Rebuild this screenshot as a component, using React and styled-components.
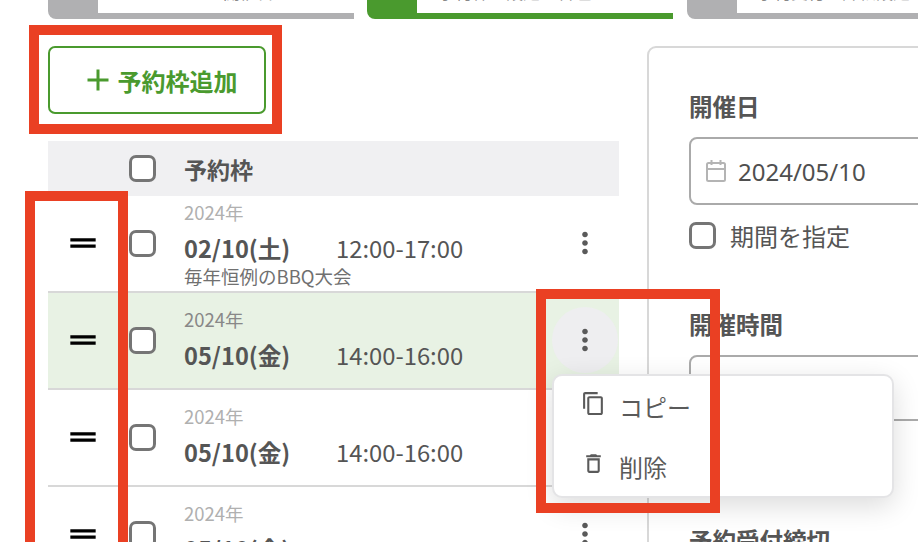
import React from "react";
import styled, { createGlobalStyle } from "styled-components";
import { MdDragHandle, MdMoreVert, MdOutlineContentCopy, MdOutlineDelete, MdAdd } from "react-icons/md";

const GlobalStyle = createGlobalStyle`
    html, body {
        margin: 0;
        width: 918px;
        height: 542px;
        overflow: hidden;
        background: #fff;
    }
    * {
        box-sizing: border-box;
    }
    body {
        font-family: "Noto Sans CJK JP", "Noto Sans", sans-serif;
        color: #555;
    }
`;

const Page = styled.div`
    position: relative;
    width: 918px;
    height: 542px;
    overflow: hidden;
    padding-left: 48px;
`;

const Tabs = styled.div`
    display: flex;
    gap: 13px;
    height: 19px;
    align-items: flex-end;
`;

const Tab = styled.div`
    flex: 0 0 306px;
    height: 60px;
    display: flex;
    border-radius: 0 0 0 8px;
    background: ${(p) => (p.$active ? "#4a9a2e" : "#b0b0b2")};
    padding: 0 0 6px 50px;

    &:last-child {
        margin-left: 1px;
    }
`;

const TabBody = styled.div`
    flex: 1;
    background: #fff;
    display: flex;
    align-items: flex-end;
    padding: 0 0 9px ${(p) => p.$indent}px;
    font-size: 17px;
    line-height: 24px;
    white-space: nowrap;
    color: #888;
`;

const Main = styled.div`
    display: flex;
    gap: 28px;
    margin-top: 27px;
`;

const LeftColumn = styled.div`
    flex: 0 0 571px;
`;

const AddButton = styled.button`
    width: 218px;
    height: 68px;
    display: flex;
    align-items: center;
    justify-content: center;
    gap: 2px;
    background: #fff;
    border: 2px solid #4a9a2e;
    border-radius: 7px;
    color: #4a9a2e;
    font-family: inherit;
    font-size: 24px;
    font-weight: 700;
    padding: 0 0 0 3px;
`;

const Table = styled.div`
    margin-top: 27px;
`;

const HeaderRow = styled.div`
    display: flex;
    align-items: center;
    height: 55px;
    background: #f0f0f2;
    padding-left: 81px;
    font-size: 23px;
    font-weight: 700;
`;

const Check = styled.span`
    flex: 0 0 27px;
    width: 27px;
    height: 27px;
    border: 3px solid #757575;
    border-radius: 7px;
    background: #fff;
`;

const HeaderLabel = styled.span`
    margin-left: 28px;
`;

const Row = styled.div`
    position: relative;
    display: flex;
    align-items: center;
    height: 97px;
    border-bottom: 2px solid #d8d8d8;
    background: ${(p) => (p.$selected ? "#e8f2e4" : "#fff")};
`;

const Handle = styled.div`
    flex: 0 0 69px;
    display: flex;
    justify-content: center;
    padding-left: 1px;
    margin-top: -1px;
    margin-right: 12px;
    color: #000;
`;

const RowCheck = styled(Check)`
    margin-top: -1px;
`;

const RowText = styled.div`
    flex: 1;
    margin: -3px 0 0 28px;
`;

const Year = styled.div`
    font-size: 18.5px;
    line-height: 26px;
    color: ${(p) => (p.$selected ? "#888" : "#b0b0b0")};
`;

const Schedule = styled.div`
    display: flex;
    align-items: baseline;
    line-height: 34px;
    margin-top: 6px;
`;

const DateText = styled.span`
    width: 152px;
    font-size: 23.6px;
    font-weight: 700;
`;

const TimeText = styled.span`
    font-size: 23.8px;
    color: #555;
`;

const Note = styled.div`
    font-size: 18.5px;
    line-height: 18px;
    margin-top: 2px;
    color: #707070;
`;

const MoreButton = styled.div`
    flex: 0 0 66px;
    height: 66px;
    margin: -2px 1px 0 0;
    display: flex;
    align-items: center;
    justify-content: center;
    border-radius: 50%;
    color: #5a5a5a;
    background: ${(p) => (p.$hover ? "#eeeef0" : "transparent")};
`;

const SidePanel = styled.div`
    flex: 0 0 400px;
    height: 560px;
    border: 2px solid #d8d8d8;
    border-radius: 9px;
    padding: 45px 0 0 40px;
`;

const FieldLabel = styled.div`
    font-size: 23.5px;
    line-height: 26px;
    font-weight: 700;
    margin-bottom: 18px;
`;

const Input = styled.div`
    display: flex;
    align-items: center;
    gap: 12px;
    height: ${(p) => p.$height}px;
    border: 2px solid #aaa;
    border-radius: 8px;
    padding-left: 15px;
    font-size: 24px;
    color: #4f4f4f;
    font-family: "Noto Sans", sans-serif;
`;

const CheckLine = styled.div`
    display: flex;
    align-items: center;
    gap: 14px;
    margin-top: 17px;
    font-size: 24px;
    line-height: 27px;
`;

const Field = styled.div`
    margin-top: ${(p) => p.$top}px;
`;

const Menu = styled.div`
    position: absolute;
    left: 552px;
    top: 374px;
    width: 342px;
    height: 124px;
    display: flex;
    flex-direction: column;
    background: #fff;
    border: 2px solid #e4e4e6;
    border-radius: 10px;
    box-shadow: 0 8px 28px rgba(0, 0, 0, 0.14);
    z-index: 2;
`;

const MenuItem = styled.div`
    display: flex;
    align-items: center;
    height: 60px;
    padding-left: 27px;
    font-size: 24px;
    color: #5a5a5a;

    svg {
        margin-bottom: 6px;
    }
`;

const MenuLabel = styled.span`
    margin-left: 13px;
`;

const Annotation = styled.div`
    position: absolute;
    left: ${(p) => p.$x}px;
    top: ${(p) => p.$y}px;
    width: ${(p) => p.$w}px;
    height: ${(p) => p.$h}px;
    border: 10px solid #ea4023;
    z-index: 3;
    pointer-events: none;
`;

const CalendarIcon = () => (
    <svg width="20" height="24" viewBox="0 0 20 24" fill="none" stroke="#b4b4b4" strokeWidth="2">
        <rect x="1" y="4" width="18" height="18" rx="1.5" />
        <path d="M1 10h18M5.5 1v5M14.5 1v5" />
    </svg>
);

const rows = [
    { date: "02/10(土)", time: "12:00-17:00", note: "毎年恒例のBBQ大会" },
    { date: "05/10(金)", time: "14:00-16:00", selected: true, hover: true },
    { date: "05/10(金)", time: "14:00-16:00" },
    { date: "05/10(金)", time: "14:00-16:00" },
];

const App = () => {
    return (
        <>
            <GlobalStyle />
            <Page>
                <Tabs>
                    <Tab>
                        <TabBody $indent={125}>開催日</TabBody>
                    </Tab>
                    <Tab $active>
                        <TabBody $indent={21}>予約枠の設定と管理</TabBody>
                    </Tab>
                    <Tab>
                        <TabBody $indent={20}>予約受付の詳細設定</TabBody>
                    </Tab>
                </Tabs>
                <Main>
                    <LeftColumn>
                        <AddButton>
                            <MdAdd size={36} />
                            予約枠追加
                        </AddButton>
                        <Table>
                            <HeaderRow>
                                <Check />
                                <HeaderLabel>予約枠</HeaderLabel>
                            </HeaderRow>
                            {rows.map((row, index) => (
                                <Row key={index} $selected={row.selected}>
                                    <Handle>
                                        <MdDragHandle size={38} />
                                    </Handle>
                                    <RowCheck />
                                    <RowText>
                                        <Year $selected={row.selected}>2024年</Year>
                                        <Schedule>
                                            <DateText>{row.date}</DateText>
                                            <TimeText>{row.time}</TimeText>
                                        </Schedule>
                                        {row.note && <Note>{row.note}</Note>}
                                    </RowText>
                                    <MoreButton $hover={row.hover}>
                                        <MdMoreVert size={34} />
                                    </MoreButton>
                                </Row>
                            ))}
                        </Table>
                    </LeftColumn>
                    <SidePanel>
                        <FieldLabel>開催日</FieldLabel>
                        <Input $height={68}>
                            <CalendarIcon />
                            2024/05/10
                        </Input>
                        <CheckLine>
                            <Check />
                            期間を指定
                        </CheckLine>
                        <Field $top={62}>
                            <FieldLabel>開催時間</FieldLabel>
                            <Input $height={66} />
                        </Field>
                        <Field $top={106}>
                            <FieldLabel>予約受付締切</FieldLabel>
                        </Field>
                    </SidePanel>
                </Main>
                <Menu>
                    <MenuItem>
                        <MdOutlineContentCopy size={25} />
                        <MenuLabel>コピー</MenuLabel>
                    </MenuItem>
                    <MenuItem>
                        <MdOutlineDelete size={25} />
                        <MenuLabel>削除</MenuLabel>
                    </MenuItem>
                </Menu>
                <Annotation $x={29} $y={25} $w={253} $h={109} />
                <Annotation $x={25} $y={191} $w={103} $h={380} />
                <Annotation $x={536} $y={289} $w={184} $h={224} />
            </Page>
        </>
    );
};

export default App;
